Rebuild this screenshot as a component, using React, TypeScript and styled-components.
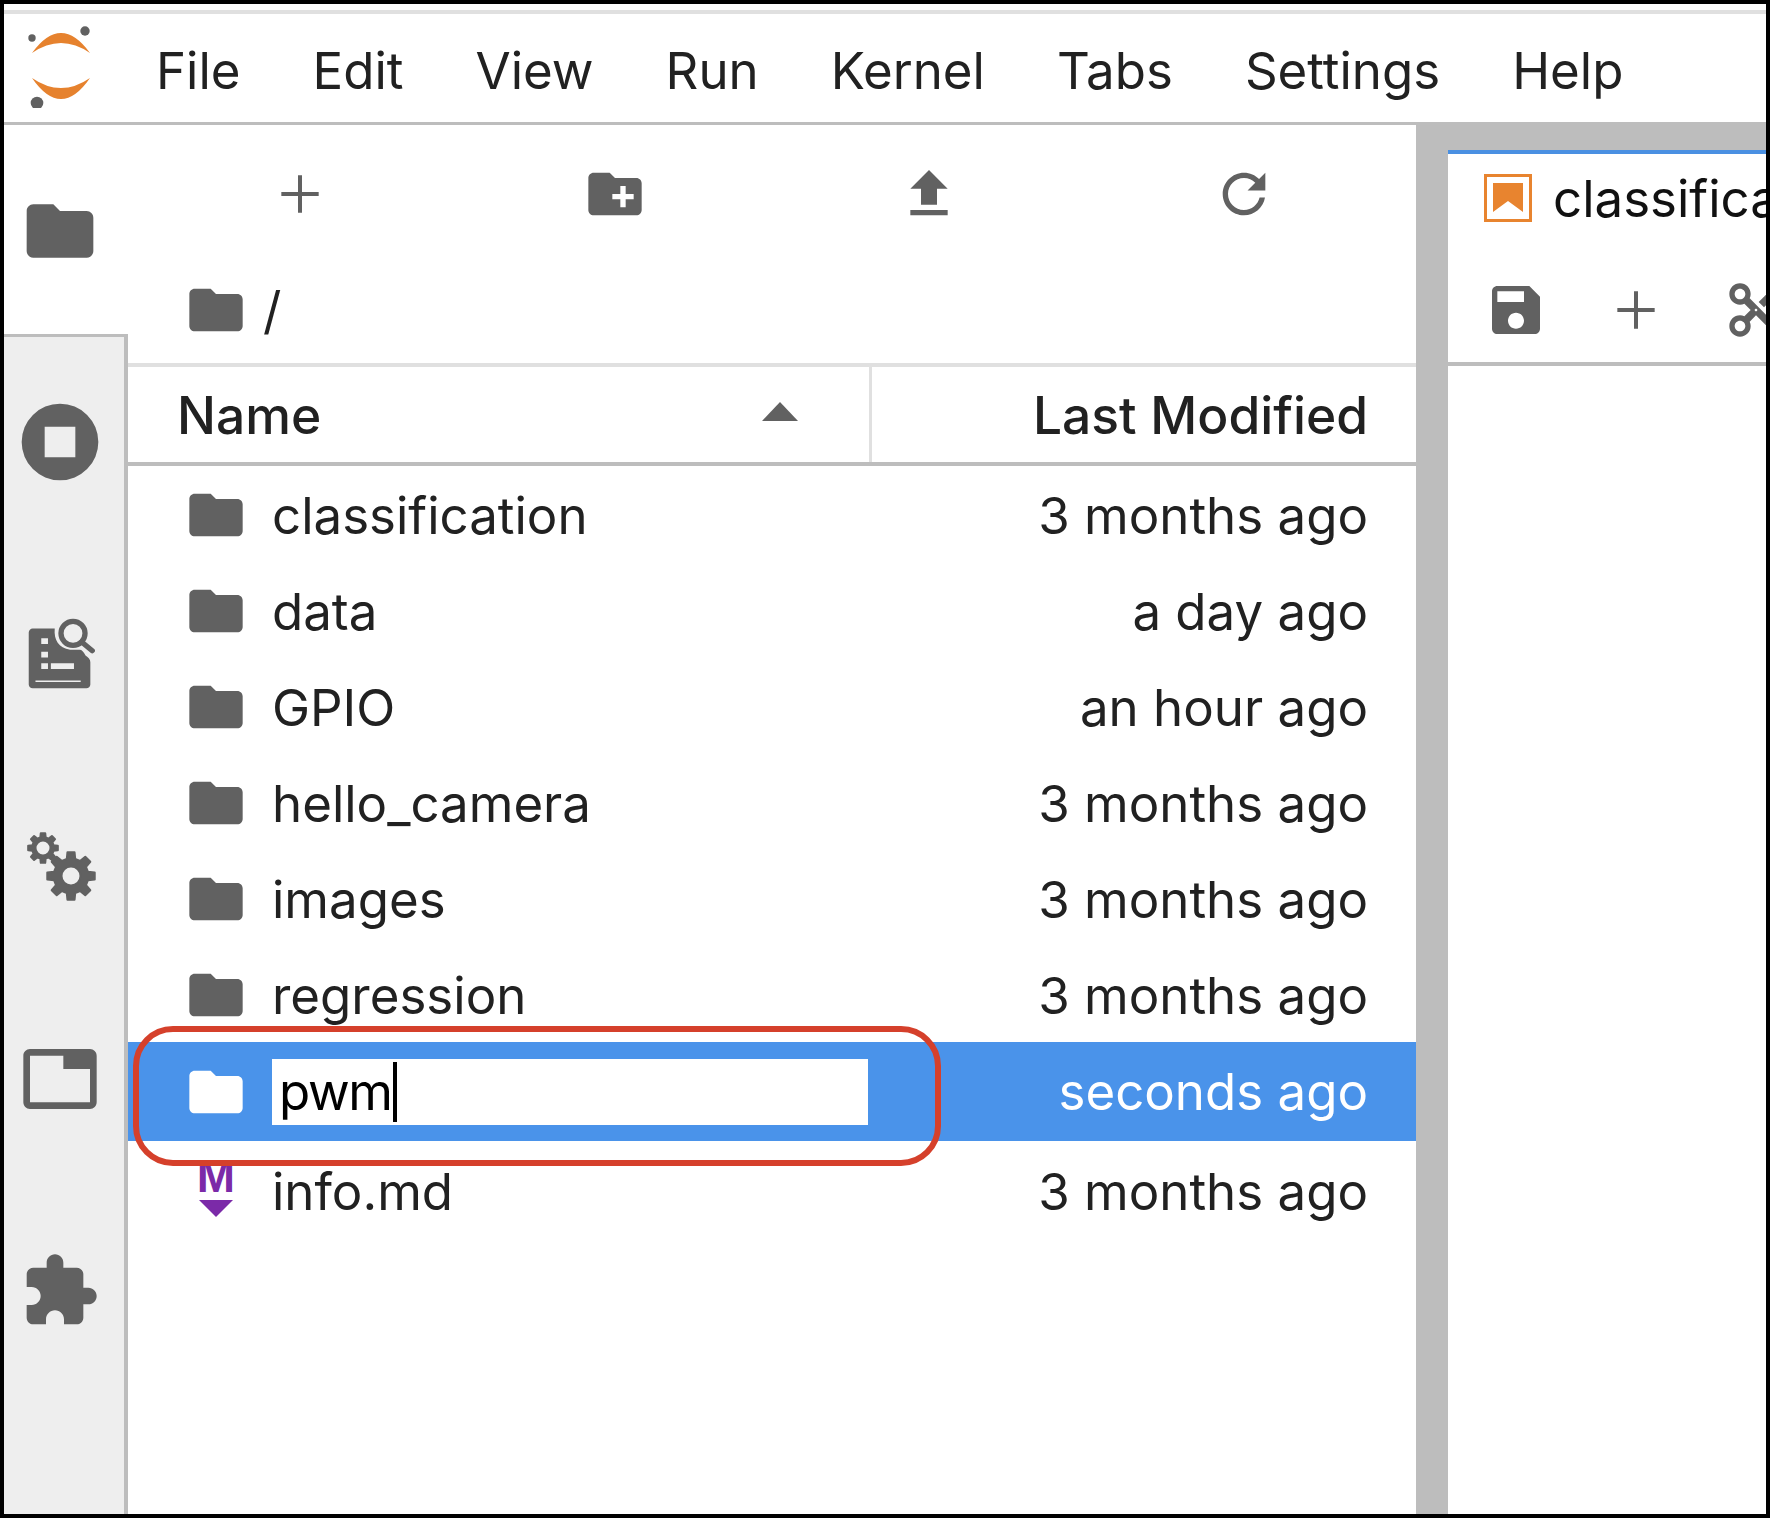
import React from 'react'
import styled, { createGlobalStyle } from 'styled-components'

const GlobalStyle = createGlobalStyle`
  html, body { margin: 0; padding: 0; background: #000; }
  body { font-family: Inter, "Liberation Sans", sans-serif; overflow: hidden; }
`

const Frame = styled.div`
  box-sizing: border-box;
  width: 1770px;
  height: 1518px;
  padding: 4px;
  background: #000;
`
const Shell = styled.div`
  position: relative;
  display: flex;
  flex-direction: column;
  height: 100%;
  background: #fff;
  overflow: hidden;
`
const TopStrip = styled.div`
  flex: none;
  height: 6px;
  border-bottom: 4px solid #e0e0e0;
`
const MenuBar = styled.div`
  flex: none;
  box-sizing: border-box;
  display: flex;
  align-items: center;
  height: 111px;
  border-bottom: 3px solid #bdbdbd;
  padding: 0 0 4px 21px;
`
const LogoBox = styled.svg`
  flex: none;
  width: 72px;
  height: 84px;
  margin-right: 59px;
`
const MenuItem = styled.span`
  margin: 9px 72px 0 0;
  font-size: 51px;
  color: #212121;
`
const Main = styled.div`
  flex: 1;
  display: flex;
  min-height: 0;
`
const Sidebar = styled.div`
  flex: none;
  width: 124px;
  display: flex;
  flex-direction: column;
`
const SideTab = styled.div<{ $active?: boolean }>`
  flex: none;
  box-sizing: border-box;
  display: flex;
  align-items: center;
  justify-content: center;
  height: 212px;
  background: ${p => (p.$active ? '#fff' : '#eeeeee')};
  border-right: ${p => (p.$active ? '0' : '4px solid #bdbdbd')};
  padding-right: ${p => (p.$active ? '12px' : '8px')};
`
const SideFill = styled.div`
  flex: 1;
  background: #eeeeee;
  border-right: 4px solid #bdbdbd;
`
const FirstInactive = styled(SideTab)`
  height: 215px;
  margin-top: -3px;
  padding-bottom: 2px;
  border-top: 3px solid #bdbdbd;
`
const FilePanel = styled.div`
  flex: none;
  width: 1288px;
  display: flex;
  flex-direction: column;
`
const FileToolbar = styled.div`
  flex: none;
  display: grid;
  grid-template-columns: repeat(4, 1fr);
  align-items: center;
  justify-items: center;
  height: 138px;
  padding: 0 15px;
`
const Crumbs = styled.div`
  flex: none;
  box-sizing: border-box;
  display: flex;
  align-items: center;
  gap: 15px;
  height: 100px;
  padding: 0 0 6px 56px;
  font-size: 51px;
  color: #212121;
`
const ListHeader = styled.div`
  flex: none;
  box-sizing: border-box;
  display: flex;
  height: 103px;
  border-top: 4px solid #e0e0e0;
  border-bottom: 4px solid #bdbdbd;
  font-size: 51.5px;
  font-weight: 500;
  color: #212121;
`
const NameColumn = styled.div`
  flex: none;
  box-sizing: border-box;
  width: 744px;
  display: flex;
  align-items: center;
  justify-content: space-between;
  padding: 0 71px 0 49px;
  border-right: 3px solid #e0e0e0;
`
const SortArrow = styled.span`
  width: 0;
  height: 0;
  margin-bottom: 6px;
  border-left: 18px solid transparent;
  border-right: 18px solid transparent;
  border-bottom: 19px solid #616161;
`
const ModifiedColumn = styled.div`
  flex: 1;
  display: flex;
  align-items: center;
  justify-content: flex-end;
  padding-right: 48px;
`
const Rows = styled.div`
  flex: 1;
  padding-top: 1px;
`
const Row = styled.div<{ $selected?: boolean }>`
  display: flex;
  align-items: center;
  height: ${p => (p.$selected ? '99px' : '96px')};
  margin: ${p => (p.$selected ? '-1px 0 2px' : '0')};
  padding: 0 48px 0 56px;
  font-size: 51px;
  color: ${p => (p.$selected ? '#fff' : '#212121')};
  background: ${p => (p.$selected ? '#4a93ea' : 'transparent')};
`
const RowName = styled.span`
  flex: 1;
  margin-left: 24px;
`
const RenameBox = styled.div`
  flex: none;
  box-sizing: border-box;
  display: flex;
  align-items: center;
  width: 596px;
  height: 66px;
  margin: 0 auto 0 24px;
  padding-left: 7px;
  background: #fff;
  color: #000;
  letter-spacing: -1.4px;
`
const Caret = styled.span`
  width: 4px;
  height: 60px;
  margin-left: 1px;
  background: #000;
`
const RedOutline = styled.div`
  position: absolute;
  left: 129px;
  top: 1022px;
  width: 808px;
  height: 140px;
  box-sizing: border-box;
  border: 6px solid #d5402b;
  border-radius: 40px;
  pointer-events: none;
`
const Splitter = styled.div`
  flex: none;
  width: 32px;
  margin-top: -3px;
  background: #bdbdbd;
`
const DockArea = styled.div`
  flex: 1;
  min-width: 0;
  display: flex;
  flex-direction: column;
  margin-top: -3px;
  padding-top: 28px;
  background: #bdbdbd;
`
const Notebook = styled.div`
  flex: 1;
  background: #fff;
  border-top: 4px solid #4a90e2;
  overflow: hidden;
`
const NotebookTab = styled.div`
  display: flex;
  align-items: center;
  height: 88px;
  padding-left: 36px;
  gap: 21px;
  font-size: 51px;
  color: #111;
  white-space: nowrap;
`
const NotebookTools = styled.div`
  box-sizing: border-box;
  display: flex;
  align-items: center;
  gap: 56px;
  height: 124px;
  padding: 16px 0 0 36px;
  border-bottom: 4px solid #bdbdbd;
`
const Icon = styled.svg<{ $size: number }>`
  flex: none;
  display: block;
  width: ${p => p.$size}px;
  height: ${p => p.$size}px;
  fill: #616161;
`

const FOLDER = 'M10 4H4c-1.1 0-1.99.9-1.99 2L2 18c0 1.1.9 2 2 2h16c1.1 0 2-.9 2-2V8c0-1.1-.9-2-2-2h-8l-2-2z'
const PLUS = 'M19 12.75h-6.25V19h-1.5v-6.25H5v-1.5h6.25V5h1.5v6.25H19z'

const PathIcon: React.FC<{ d: string; size?: number; color?: string }> = ({ d, size = 64, color }) => (
  <Icon $size={size} viewBox="0 0 24 24" style={color ? { fill: color } : undefined}>
    <path d={d} fillRule="evenodd" />
  </Icon>
)

const JupyterLogo: React.FC = () => (
  <LogoBox viewBox="0 0 72 84">
    <path fill="#e6822e" d="M7 29 Q36 -11 65 29 Q36 9 7 29 Z" />
    <path fill="#e6822e" d="M7 54 Q36 96 65 54 Q36 74 7 54 Z" />
    <circle cx="60" cy="7" r="4.7" fill="#616161" />
    <circle cx="7" cy="14" r="3.7" fill="#616161" />
    <circle cx="12" cy="79" r="6.3" fill="#616161" />
  </LogoBox>
)

const StopIcon: React.FC = () => (
  <Icon $size={92} viewBox="0 0 24 24">
    <path fillRule="evenodd" d="M12 2a10 10 0 1 0 0 20 10 10 0 0 0 0-20zM8 8h8v8H8z" />
  </Icon>
)

const ListSearchIcon: React.FC = () => (
  <Icon $size={77} viewBox="0 0 80 80">
    <path
      fillRule="evenodd"
      d="M11 12 H34 C33 24 38 32 50 34 H60 C62 34 64 36 66 40 C69 42 71 44 71 47 V70 C71 72 69 74 67 74 H11 C9 74 7 72 7 70 V16 C7 14 9 12 11 12 Z M20 22 V28 H27 V22 Z M20 36 V42 H27 V36 Z M20 48 V54 H27 V48 Z M30 48 V54 H54 V48 Z M14 66 V67.5 H61 V66 Z"
    />
    <circle cx="53" cy="17" r="12.5" fill="none" stroke="#616161" strokeWidth="5.5" />
    <path d="M62 26 L73 35" stroke="#616161" strokeWidth="5.5" strokeLinecap="round" />
  </Icon>
)

// cog outline with a hole, used twice at different sizes
const gearPath = (cx: number, cy: number, outer: number, inner: number, hole: number) => {
  const teeth = 8
  const pts: string[] = []
  for (let i = 0; i < teeth; i++) {
    const a = (i / teeth) * Math.PI * 2 - Math.PI / 2
    const step = Math.PI / teeth
    const corners: [number, number][] = [
      [inner, a - step * 0.62],
      [outer, a - step * 0.38],
      [outer, a + step * 0.38],
      [inner, a + step * 0.62],
    ]
    corners.forEach(([r, t]) => pts.push(`${(cx + r * Math.cos(t)).toFixed(2)} ${(cy + r * Math.sin(t)).toFixed(2)}`))
  }
  const ring = `M${cx - hole} ${cy}a${hole} ${hole} 0 1 0 ${hole * 2} 0a${hole} ${hole} 0 1 0 ${-hole * 2} 0z`
  return `M${pts.join('L')}Z${ring}`
}

const GearsIcon: React.FC = () => (
  <Icon $size={80} viewBox="0 0 80 80" stroke="#616161" strokeWidth="2" strokeLinejoin="round">
    <path fillRule="evenodd" d={gearPath(23, 21, 15, 11, 7.5)} />
    <path fillRule="evenodd" d={gearPath(51, 49, 24, 17.5, 9.5)} />
  </Icon>
)

const MarkdownIcon: React.FC = () => (
  <Icon $size={64} viewBox="0 0 64 64" style={{ fill: '#7b2aa8' }}>
    <text x="32" y="33" textAnchor="middle" fontFamily="Liberation Sans, sans-serif" fontWeight="700" fontSize="46">
      M
    </text>
    <path d="M15 41 H49 L32 58 Z" />
  </Icon>
)

const NotebookIcon: React.FC = () => (
  <Icon $size={48} viewBox="0 0 48 48">
    <rect x="1.5" y="1.5" width="45" height="45" fill="#fff" stroke="#e8842f" strokeWidth="3" />
    <path d="M9 9 H39 V38 L24 27 L9 38 Z" fill="#e8842f" />
  </Icon>
)

const files = [
  { name: 'classification', modified: '3 months ago' },
  { name: 'data', modified: 'a day ago' },
  { name: 'GPIO', modified: 'an hour ago' },
  { name: 'hello_camera', modified: '3 months ago' },
  { name: 'images', modified: '3 months ago' },
  { name: 'regression', modified: '3 months ago' },
]

const menus = ['File', 'Edit', 'View', 'Run', 'Kernel', 'Tabs', 'Settings', 'Help']

const App: React.FC = () => (
  <Frame>
    <GlobalStyle />
    <Shell>
      <TopStrip />
      <MenuBar>
        <JupyterLogo />
        {menus.map(m => (
          <MenuItem key={m}>{m}</MenuItem>
        ))}
      </MenuBar>
      <Main>
        <Sidebar>
          <SideTab $active>
            <PathIcon d={FOLDER} size={80} />
          </SideTab>
          <FirstInactive>
            <StopIcon />
          </FirstInactive>
          <SideTab>
            <ListSearchIcon />
          </SideTab>
          <SideTab>
            <GearsIcon />
          </SideTab>
          <SideTab>
            <PathIcon size={80} d="M21 3H3c-1.1 0-2 .9-2 2v14c0 1.1.9 2 2 2h18c1.1 0 2-.9 2-2V5c0-1.1-.9-2-2-2zm0 16H3V5h10v4h8v10z" />
          </SideTab>
          <SideTab>
            <PathIcon size={80} d="M20.5 11H19V7c0-1.1-.9-2-2-2h-4V3.5C13 2.12 11.88 1 10.5 1S8 2.12 8 3.5V5H4c-1.1 0-1.99.9-1.99 2v3.8H3.5c1.49 0 2.7 1.21 2.7 2.7s-1.21 2.7-2.7 2.7H2V20c0 1.1.9 2 2 2h3.8v-1.5c0-1.49 1.21-2.7 2.7-2.7 1.49 0 2.7 1.21 2.7 2.7V22H17c1.1 0 2-.9 2-2v-4h1.5c1.38 0 2.5-1.12 2.5-2.5S21.88 11 20.5 11z" />
          </SideTab>
          <SideFill />
        </Sidebar>
        <FilePanel>
          <FileToolbar>
            <PathIcon d={PLUS} />
            <PathIcon d="M20 6h-8l-2-2H4c-1.11 0-1.99.89-1.99 2L2 18c0 1.11.89 2 2 2h16c1.11 0 2-.89 2-2V8c0-1.11-.89-2-2-2zm-1 8h-3v3h-2v-3h-3v-2h3V9h2v3h3v2z" />
            <PathIcon d="M9 16h6v-6h4l-7-7-7 7h4zm-4 2h14v2H5z" />
            <Icon $size={64} viewBox="0 0 18 18">
              <path d="M9 13.5c-2.49 0-4.5-2.01-4.5-4.5S6.51 4.5 9 4.5c1.24 0 2.36.52 3.17 1.33L10 8h5V3l-1.76 1.76C12.15 3.67 10.66 3 9 3 5.69 3 3.01 5.69 3.01 9S5.69 15 9 15c2.97 0 5.43-2.16 5.9-5h-1.52c-.46 2-2.24 3.5-4.38 3.5z" />
            </Icon>
          </FileToolbar>
          <Crumbs>
            <PathIcon d={FOLDER} />
            <span>/</span>
          </Crumbs>
          <ListHeader>
            <NameColumn>
              <span>Name</span>
              <SortArrow />
            </NameColumn>
            <ModifiedColumn>Last Modified</ModifiedColumn>
          </ListHeader>
          <Rows>
            {files.map(f => (
              <Row key={f.name}>
                <PathIcon d={FOLDER} />
                <RowName>{f.name}</RowName>
                <span>{f.modified}</span>
              </Row>
            ))}
            <Row $selected>
              <PathIcon d={FOLDER} color="#fff" />
              <RenameBox>
                pwm
                <Caret />
              </RenameBox>
              <span>seconds ago</span>
            </Row>
            <Row>
              <MarkdownIcon />
              <RowName>info.md</RowName>
              <span>3 months ago</span>
            </Row>
          </Rows>
        </FilePanel>
        <Splitter />
        <DockArea>
          <Notebook>
            <NotebookTab>
              <NotebookIcon />
              classification.ipynb
            </NotebookTab>
            <NotebookTools>
              <PathIcon d="M17 3H5c-1.11 0-2 .9-2 2v14c0 1.1.89 2 2 2h14c1.1 0 2-.9 2-2V7l-4-4zm-5 16c-1.66 0-3-1.34-3-3s1.34-3 3-3 3 1.34 3 3-1.34 3-3 3zm3-10H5V5h10v4z" />
              <PathIcon d={PLUS} />
              <PathIcon d="M9.64 7.64c.23-.5.36-1.05.36-1.64 0-2.21-1.79-4-4-4S2 3.79 2 6s1.79 4 4 4c.59 0 1.14-.13 1.64-.36L10 12l-2.36 2.36C7.14 14.13 6.59 14 6 14c-2.21 0-4 1.79-4 4s1.79 4 4 4 4-1.79 4-4c0-.59-.13-1.14-.36-1.64L12 14l7 7h3v-1L9.64 7.64zM6 8c-1.1 0-2-.89-2-2s.9-2 2-2 2 .89 2 2-.9 2-2 2zm0 12c-1.1 0-2-.89-2-2s.9-2 2-2 2 .89 2 2-.9 2-2 2zm6-7.5c-.28 0-.5-.22-.5-.5s.22-.5.5-.5.5.22.5.5-.22.5-.5.5zM19 3l-6 6 2 2 7-7V3z" />
            </NotebookTools>
          </Notebook>
        </DockArea>
      </Main>
      <RedOutline />
    </Shell>
  </Frame>
)

export default App
